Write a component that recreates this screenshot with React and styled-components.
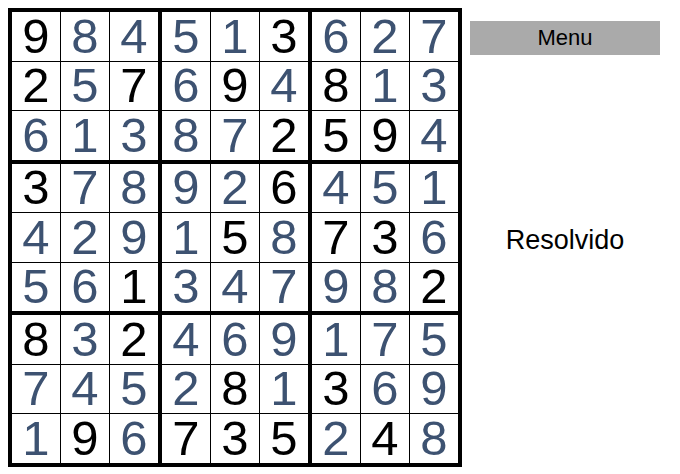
import React from 'react';
import styled, { createGlobalStyle } from 'styled-components';

const GlobalStyle = createGlobalStyle`
  body {
    margin: 8px;
    background: #fff;
    font-family: "Liberation Sans", Arial, sans-serif;
  }
`;

const Page = styled.div`
  display: flex;
  align-items: stretch;
`;

const Board = styled.div`
  display: grid;
  grid-template-columns: repeat(3, auto);
  gap: 4px;
  border: 4px solid #000;
  background: #000;
  width: max-content;
`;

const Block = styled.div`
  display: grid;
  grid-template-columns: repeat(3, 48px);
  grid-template-rows: repeat(3, 48.5px);
  gap: 1px;
  background: #000;
`;

const Cell = styled.div`
  display: flex;
  align-items: center;
  justify-content: center;
  background: #fff;
  font-size: 49px;
  line-height: 1;
  color: ${props => (props.given ? '#000' : '#3d5271')};
`;

const Side = styled.div`
  display: flex;
  flex-direction: column;
  width: 190px;
  margin-left: 8px;
  padding-top: 13px;
`;

const MenuButton = styled.button`
  height: 34px;
  border: none;
  background: #aaaaaa;
  font-family: "Liberation Sans", Arial, sans-serif;
  font-size: 22px;
  color: #000;
  padding: 0;
  cursor: pointer;
`;

const Status = styled.div`
  flex: 1;
  display: flex;
  align-items: center;
  justify-content: center;
  font-size: 27px;
  padding-bottom: 40px;
`;

const rows = [
  '9b8 4 5 1 3b6 2 7 ',
  '2b5 7b6 9b4 8b1 3 ',
  '6 1 3 8 7 2b5b9b4 ',
  '3b7 8 9 2 6b4 5 1 ',
  '4 2 9 1 5b8 7b3b6 ',
  '5 6 1b3 4 7 9 8 2b',
  '8b3 2b4 6 9 1 7 5 ',
  '7 4 5 2 8b1 3b6 9 ',
  '1 9b6 7b3b5b2 4b8 ',
];

const grid = rows.map(r => {
  const out = [];
  for (let i = 0; i < 9; i++) {
    out.push({ value: r[i * 2], given: r[i * 2 + 1] === 'b' });
  }
  return out;
});

const App = () => {
  const blocks = [];
  for (let b = 0; b < 9; b++) {
    const br = Math.floor(b / 3) * 3;
    const bc = (b % 3) * 3;
    const cells = [];
    for (let r = 0; r < 3; r++) {
      for (let c = 0; c < 3; c++) {
        const cell = grid[br + r][bc + c];
        cells.push(
          <Cell key={`${r}-${c}`} given={cell.given}>
            {cell.value}
          </Cell>
        );
      }
    }
    blocks.push(<Block key={b}>{cells}</Block>);
  }

  return (
    <>
      <GlobalStyle />
      <Page>
        <Board>{blocks}</Board>
        <Side>
          <MenuButton>Menu</MenuButton>
          <Status>Resolvido</Status>
        </Side>
      </Page>
    </>
  );
};

export default App;
